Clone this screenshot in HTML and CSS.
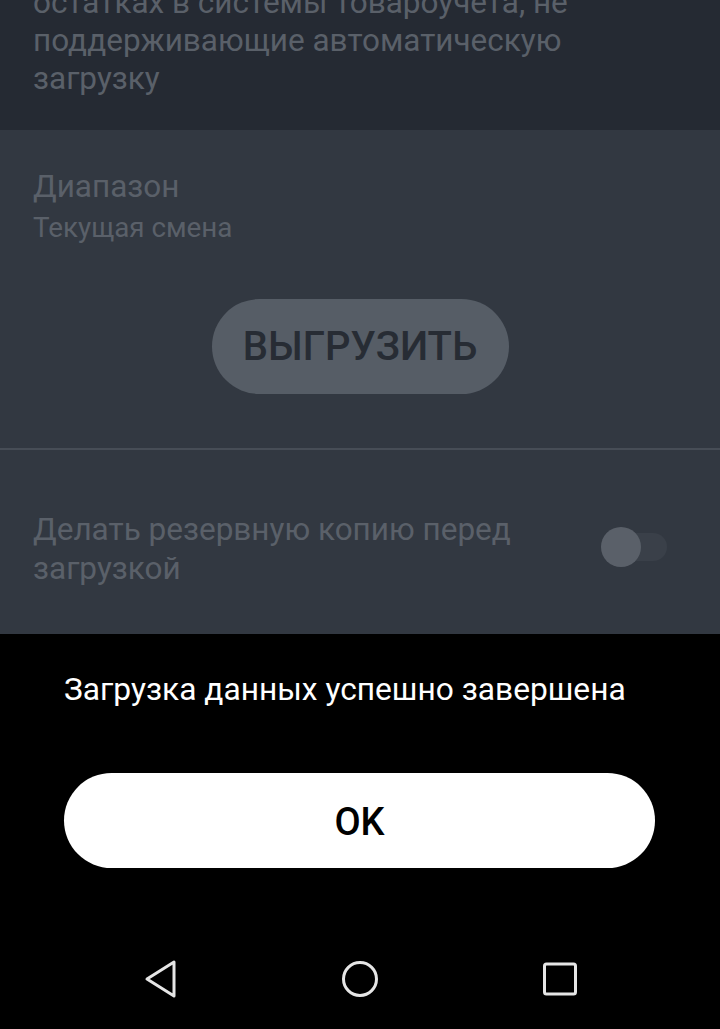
FILE: index.html
```html
<!DOCTYPE html>
<html lang="ru">
<head>
    <meta charset="UTF-8">
    <meta name="viewport" content="width=device-width, initial-scale=1.0">
    <title>Выгрузка данных</title>
    <link rel="stylesheet" href="styles.css">
</head>
<body>
    <div class="screen">
        <div class="settings">
            <section class="block block-info">
                <p class="hint">остатках в системы товароучета, не поддерживающие автоматическую загрузку</p>
            </section>

            <section class="block block-range">
                <div class="title">Диапазон</div>
                <div class="subtitle">Текущая смена</div>
                <div class="actions">
                    <button class="btn-upload" disabled>ВЫГРУЗИТЬ</button>
                </div>
            </section>

            <section class="block block-backup">
                <div class="title">Делать резервную копию перед загрузкой</div>
                <div class="switch">
                    <span class="switch-track"></span>
                    <span class="switch-thumb"></span>
                </div>
            </section>
        </div>

        <div class="dialog">
            <p class="dialog-message">Загрузка данных успешно завершена</p>
            <button class="btn-ok">OK</button>
        </div>

        <nav class="navbar">
            <!-- back -->
            <svg class="nav-icon" width="40" height="40" viewBox="0 0 40 40">
                <path d="M34 3 L34 37 L7 20 Z" fill="none" stroke="#e6e6e6" stroke-width="3" stroke-linejoin="round"/>
            </svg>
            <!-- home -->
            <svg class="nav-icon" width="40" height="40" viewBox="0 0 40 40">
                <circle cx="20" cy="20" r="16.5" fill="none" stroke="#e6e6e6" stroke-width="3"/>
            </svg>
            <!-- recents -->
            <svg class="nav-icon" width="40" height="40" viewBox="0 0 40 40">
                <rect x="4.5" y="5" width="31" height="30" rx="2" fill="none" stroke="#e6e6e6" stroke-width="3"/>
            </svg>
        </nav>
    </div>
</body>
</html>
```

FILE: styles.css
```css
html, body {
    margin: 0;
    padding: 0;
    background: #000;
}
body {
    font-family: Roboto, "Noto Sans", sans-serif;
    width: 720px;
    height: 1029px;
    overflow: hidden;
}
.screen {
    display: flex;
    flex-direction: column;
    height: 1029px;
}
.settings {
    margin-top: -16px;
    background: #323841;
}
.block {
    padding: 0 33px;
    color: #5a6069;
}
.block-info {
    background: #252a33;
    padding-bottom: 32px;
}
.hint {
    margin: 0;
    width: 600px;
    font-size: 31.5px;
    line-height: 38px;
}
.title {
    font-size: 31.5px;
    line-height: 38px;
}
.subtitle {
    margin-top: 5px;
    font-size: 27.8px;
    line-height: 34px;
}
.block-range {
    padding-top: 38px;
    padding-bottom: 54px;
}
.actions {
    display: flex;
    justify-content: center;
    margin-top: 54px;
}
.btn-upload {
    width: 297px;
    height: 95px;
    border: none;
    border-radius: 48px;
    background: #565d66;
    color: #272c34;
    font-family: Roboto, sans-serif;
    font-weight: 500;
    font-size: 40px;
    padding: 0;
}
.block-backup {
    border-top: 2px solid #474d56;
    display: flex;
    align-items: center;
    justify-content: space-between;
    padding-top: 58px;
    padding-bottom: 46px;
    padding-right: 53px;
}
.block-backup .title {
    width: 520px;
    line-height: 39px;
    padding-top: 2px;
}
.switch {
    position: relative;
    width: 66px;
    height: 40px;
    flex-shrink: 0;
    margin-top: -2px;
}
.switch-track {
    position: absolute;
    left: 6px;
    right: 0;
    top: 6px;
    height: 28px;
    border-radius: 14px;
    background: #3a4049;
}
.switch-thumb {
    position: absolute;
    left: 0;
    top: 0;
    width: 40px;
    height: 40px;
    border-radius: 50%;
    background: #5a6069;
}
.dialog {
    background: #000;
    padding: 37px 65px 61px 64px;
}
.dialog-message {
    margin: 0;
    color: #fff;
    font-size: 31.7px;
    line-height: 38px;
}
.btn-ok {
    display: block;
    width: 100%;
    height: 95px;
    margin-top: 64px;
    border: none;
    border-radius: 48px;
    background: #fff;
    color: #000;
    font-family: Roboto, sans-serif;
    font-weight: 500;
    font-size: 38px;
    padding: 3px 0 0;
}
.navbar {
    flex: 1;
    display: flex;
    align-items: center;
    justify-content: space-between;
    padding: 0 140px;
    background: #000;
}
.nav-icon {
    display: block;
}
```
